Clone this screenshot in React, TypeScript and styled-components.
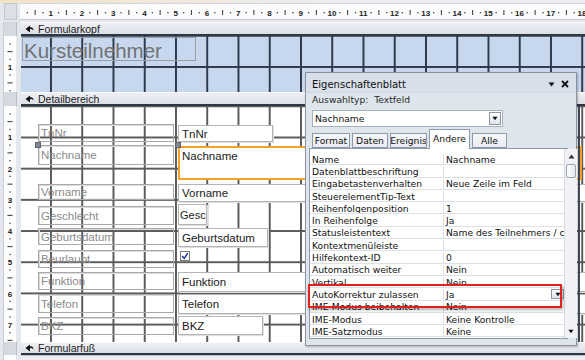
import React from "react";
import styled, { createGlobalStyle } from "styled-components";

const CM = 31.25;

const Global = createGlobalStyle`
  html, body { margin: 0; padding: 0; background: #e4e7ec; overflow: hidden; }
  body { font-family: "Liberation Sans", Arial, sans-serif; }
`;

const Screen = styled.div`
  position: relative;
  width: 585px;
  height: 360px;
  overflow: hidden;
  background: #e4e7ec;
  display: flex;
  flex-direction: column;
`;

const TopStrip = styled.div`
  flex: none;
  height: 3px;
  background: linear-gradient(to right, #f3e2c6, #eceef2 60%);
`;

const RulerRow = styled.div`
  flex: none;
  display: flex;
  height: 17px;
  margin-bottom: 2px;
`;

const Corner = styled.div`
  width: 13px;
  margin-left: 4px;
  box-sizing: border-box;
  background: #dcdfe5;
  border: 1px solid #c3c8d0;
`;

const HRulerBox = styled.div`
  flex: 1;
  margin-left: 3px;
  box-sizing: border-box;
  background: #fbfbfc;
  border-top: 1px solid #d3d7dd;
  border-bottom: 1px solid #c4c9d0;
  overflow: hidden;
`;

const SectionRow = styled.div<{ $h: number }>`
  flex: none;
  display: flex;
  height: ${(p) => p.$h}px;
`;

const RulerCell = styled.div<{ $sel?: boolean }>`
  flex: none;
  width: 14px;
  margin-left: 3px;
  margin-right: 4px;
  box-sizing: border-box;
  background: ${(p) => (p.$sel ? "#d5d9e0" : "#fdfdfd")};
  border-left: 1px solid #c8ccd3;
  border-right: 1px solid ${(p) => (p.$sel ? "#b9bec7" : "#e6e8ec")};
  overflow: hidden;
`;

const SectionBar = styled.div`
  flex: 1;
  display: flex;
  align-items: center;
  gap: 4px;
  padding-left: 4px;
  box-sizing: border-box;
  background: linear-gradient(#eef0f4, #dcdfe6);
  border-top: 1px solid #fafafa;
  border-bottom: 2px solid #2f3742;
  font-size: 10.5px;
  color: #1c1c1c;
`;

const HeaderArea = styled.div`
  flex: 1;
  position: relative;
  background-color: #c7d8ee;
  background-image: linear-gradient(to right, #2d3a4b 2px, transparent 2px),
    linear-gradient(to bottom, #2d3a4b 2px, transparent 2px);
  background-size: ${CM}px 100%, 100% ${CM}px;
  background-position: 29px 0, 0 30px;
`;

const DetailArea = styled.div`
  flex: 1;
  position: relative;
  background-color: #ffffff;
  background-image: linear-gradient(to right, #5b5b5b 2px, transparent 2px),
    linear-gradient(to bottom, #5b5b5b 2px, transparent 2px);
  background-size: ${CM}px 100%, 100% 31.2px;
  background-position: 29px 0, 0 30.5px;
`;

const BottomArea = styled.div`
  flex: 1;
  background: #eceef2;
  border-top: 1px solid #bfc4cc;
`;

const TitleLabel = styled.div`
  position: absolute;
  left: 1px;
  top: 1px;
  width: 174px;
  height: 24px;
  box-sizing: border-box;
  border: 1px solid #9aa0a8;
  font-size: 20.5px;
  line-height: 26px;
  padding-left: 1px;
  color: #717171;
  white-space: nowrap;
`;

const FieldLabel = styled.div`
  position: absolute;
  left: 17px;
  width: 136px;
  box-sizing: border-box;
  border: 1px solid #a9a9a9;
  box-shadow: inset 1px 1px 0 #d9d9d9;
  padding-left: 2px;
  font-size: 11.5px;
  color: #8a8a8a;
  display: flex;
  align-items: center;
  white-space: nowrap;
`;

const TextBox = styled.div<{ $selected?: boolean }>`
  position: absolute;
  left: 157px;
  box-sizing: border-box;
  background: #ffffff;
  border: ${(p) => (p.$selected ? "2px solid #f5a02a" : "1px solid #b4b4b4")};
  box-shadow: ${(p) => (p.$selected ? "none" : "1px 1px 0 #dedede")};
  padding-left: ${(p) => (p.$selected ? "2px" : "3px")};
  font-size: 11.5px;
  color: #1a1a1a;
  display: flex;
  align-items: ${(p) => (p.$selected ? "flex-start" : "center")};
  padding-top: ${(p) => (p.$selected ? "2px" : "0")};
  white-space: nowrap;
  overflow: hidden;
`;

const NarrowBox = styled(TextBox)`
  padding-left: 1px;
  font-size: 11px;
`;

const Handle = styled.div`
  position: absolute;
  width: 6px;
  height: 6px;
  background: #7f8893;
  border: 1px solid #5f6670;
  box-sizing: border-box;
`;

const CheckBox = styled.div`
  position: absolute;
  left: 159px;
  top: 145px;
  width: 10px;
  height: 10px;
  box-sizing: border-box;
  border: 1px solid #7c7c7c;
  background: #fff;
  display: flex;
  align-items: center;
  justify-content: center;
`;

/* Property sheet */
const Panel = styled.div`
  position: absolute;
  left: 305px;
  top: 72px;
  width: 272px;
  height: 274px;
  box-sizing: border-box;
  border: 1px solid #8793a3;
  background: #dfe5ed;
  box-shadow: 1px 1px 2px rgba(0, 0, 0, 0.25);
  display: flex;
  flex-direction: column;
  padding: 0 7px 0 4px;
  font-family: "DejaVu Sans", Verdana, sans-serif;
  font-size: 9.2px;
  color: #111;
`;

const PanelTitle = styled.div`
  flex: none;
  height: 20px;
  margin: 0 -7px 0 -4px;
  padding: 3px 7px 0 6px;
  box-sizing: border-box;
  display: flex;
  align-items: center;
  justify-content: space-between;
  background: #d8dfe8;
  border-bottom: 1px solid #cfd6e0;
  font-size: 10px;
`;

const TitleIcons = styled.div`
  display: flex;
  align-items: center;
  gap: 6px;
`;

const TypeLine = styled.div`
  flex: none;
  height: 13px;
  display: flex;
  align-items: center;
  padding-left: 2px;
  color: #2a2a2a;
`;

const Combo = styled.div`
  flex: none;
  margin-top: 4px;
  margin-left: 2px;
  width: 191px;
  height: 17px;
  box-sizing: border-box;
  background: #fff;
  border: 1px solid #a7b1bd;
  display: flex;
  align-items: center;
  justify-content: space-between;
  padding: 0 1px 0 2px;
`;

const DropButton = styled.div<{ $small?: boolean }>`
  width: ${(p) => (p.$small ? 13 : 12)}px;
  height: ${(p) => (p.$small ? 10 : 13)}px;
  box-sizing: border-box;
  border: 1px solid #8e97a3;
  background: linear-gradient(#fdfdfd, #dfe3e8);
  display: flex;
  align-items: center;
  justify-content: center;
`;

const Tabs = styled.div`
  flex: none;
  margin-top: 3px;
  margin-left: 2px;
  height: 18px;
  display: flex;
  align-items: flex-end;
  gap: 2px;
  position: relative;
  z-index: 1;
`;

const Tab = styled.div<{ $w: number; $active?: boolean }>`
  width: ${(p) => p.$w}px;
  height: ${(p) => (p.$active ? 20 : 15)}px;
  margin-bottom: ${(p) => (p.$active ? -1 : 0)}px;
  box-sizing: border-box;
  border: 1px solid #8f9aa8;
  border-bottom: ${(p) => (p.$active ? "none" : "1px solid #8f9aa8")};
  background: ${(p) => (p.$active ? "#ffffff" : "linear-gradient(#f7f8fa, #e6eaef)")};
  display: flex;
  align-items: center;
  justify-content: center;
  padding-bottom: ${(p) => (p.$active ? 3 : 0)}px;
  overflow: hidden;
  white-space: nowrap;
`;

const Grid = styled.div`
  flex: none;
  margin-left: -1px;
  width: 259px;
  height: 191px;
  box-sizing: border-box;
  border: 1px solid #8f9aa8;
  background: #fff;
  display: flex;
  padding-top: 4px;
`;

const Rows = styled.div`
  flex: 1;
  display: flex;
  flex-direction: column;
`;

const Row = styled.div`
  flex: none;
  height: 12.3px;
  display: flex;
  box-sizing: border-box;
  border-bottom: 1px solid #dde1e7;
  border-top: 1px solid transparent;
`;

const NameCell = styled.div`
  width: 134px;
  flex: none;
  box-sizing: border-box;
  border-right: 1px solid #dde1e7;
  padding-left: 2px;
  display: flex;
  align-items: center;
  white-space: nowrap;
  overflow: hidden;
`;

const ValueCell = styled.div`
  flex: 1;
  min-width: 0;
  padding-left: 2px;
  display: flex;
  align-items: center;
  justify-content: space-between;
  white-space: nowrap;
  overflow: hidden;
`;

const ScrollBar = styled.div`
  width: 13px;
  flex: none;
  margin-top: -4px;
  background: #f0f2f5;
  border-left: 1px solid #d6dbe1;
  display: flex;
  flex-direction: column;
  align-items: center;
  padding: 5px 0 4px;
  box-sizing: border-box;
`;

const Thumb = styled.div`
  margin-top: 5px;
  width: 10px;
  height: 14px;
  box-sizing: border-box;
  border: 1px solid #9aa3ae;
  border-radius: 2px;
  background: linear-gradient(to right, #ffffff, #e6e9ee);
`;

const Spacer = styled.div`
  flex: 1;
`;

const Highlight = styled.div`
  position: absolute;
  left: 308px;
  top: 284px;
  width: 254px;
  height: 24px;
  box-sizing: border-box;
  border: 2px solid #e2211d;
  box-shadow: 1px 2px 3px rgba(0, 0, 0, 0.3);
  pointer-events: none;
`;

const SideMark = styled.div`
  position: absolute;
  left: 578px;
  top: 106px;
  width: 2px;
  height: 236px;
  background: #404a56;
`;

/* Drawings */
const SectionIcon = () => (
  <svg width="9" height="8" viewBox="0 0 9 8">
    <path d="M0.5 4 L5 0.5 L5 2.3 Q8.5 2 8.5 5.5 Q7.2 3.9 5 4.1 L5 7.5 Z" fill="#111" />
  </svg>
);

const HRuler = () => {
  const items: React.ReactNode[] = [];
  for (let q = 1; q <= 74; q++) {
    const x = -0.5 + (q * CM) / 4;
    if (q % 4 === 0) {
      items.push(
        <text key={q} x={x} y={11.5} fontSize="8" fontWeight="700" textAnchor="middle" fill="#222" fontFamily="Liberation Sans, Arial, sans-serif">
          {q / 4}
        </text>
      );
    } else if (q % 4 === 2) {
      items.push(<line key={q} x1={x} x2={x} y1={6} y2={11} stroke="#333" strokeWidth="1" />);
    } else {
      items.push(<rect key={q} x={x - 0.6} y={8} width={1.3} height={1.3} fill="#444" />);
    }
  }
  return (
    <svg width="565" height="15" viewBox="0 0 565 15">
      {items}
    </svg>
  );
};

const VRuler = ({ height, max }: { height: number; max: number }) => {
  const items: React.ReactNode[] = [];
  for (let q = 1; q <= max; q++) {
    const y = (q * CM) / 4;
    if (q % 4 === 0) {
      items.push(
        <text key={q} x={6} y={y + 3} fontSize="8" fontWeight="700" textAnchor="middle" fill="#222" fontFamily="Liberation Sans, Arial, sans-serif">
          {q / 4}
        </text>
      );
    } else if (q % 4 === 2) {
      items.push(<line key={q} x1={3.5} x2={8.5} y1={y} y2={y} stroke="#333" strokeWidth="1" />);
    } else {
      items.push(<rect key={q} x={5.4} y={y - 0.6} width={1.3} height={1.3} fill="#444" />);
    }
  }
  return (
    <svg width="12" height={height} viewBox={`0 0 12 ${height}`}>
      {items}
    </svg>
  );
};

const labels: [string, number, number][] = [
  ["TnNr", 18, 18],
  ["Nachname", 39, 20],
  ["Vorname", 78, 16],
  ["Geschlecht", 100, 19],
  ["Geburtsdatum", 122, 17],
  ["Beurlaubt", 144, 18],
  ["Funktion", 166, 18],
  ["Telefon", 188, 19],
  ["BKZ", 211, 18],
];

const boxes: [string, number, number, number, boolean?][] = [
  ["TnNr", 19, 17, 95],
  ["Nachname", 40, 34, 404, true],
  ["Vorname", 78, 18, 420],
  ["Geburtsdatum", 122, 19, 90],
  ["Funktion", 166, 20, 420],
  ["Telefon", 188, 20, 420],
  ["BKZ", 210, 19, 85],
];

const props: [string, string][] = [
  ["Name", "Nachname"],
  ["Datenblattbeschriftung", ""],
  ["Eingabetastenverhalten", "Neue Zeile im Feld"],
  ["SteuerelementTip-Text", ""],
  ["Reihenfolgenposition", "1"],
  ["In Reihenfolge", "Ja"],
  ["Statusleistentext", "Name des Teilnehmers / c"],
  ["Kontextmenüleiste", ""],
  ["Hilfekontext-ID", "0"],
  ["Automatisch weiter", "Nein"],
  ["Vertikal", "Nein"],
  ["AutoKorrektur zulassen", "Ja"],
  ["IME-Modus beibehalten", "Nein"],
  ["IME-Modus", "Keine Kontrolle"],
  ["IME-Satzmodus", "Keine"],
];

const DownGlyph = ({ w = 7 }: { w?: number }) => (
  <svg width={w} height="5" viewBox="0 0 7 5">
    <path d="M0.5 0.5 L6.5 0.5 L3.5 4.5 Z" fill="#111" />
  </svg>
);

export default function App() {
  return (
    <Screen>
      <Global />
      <TopStrip />
      <RulerRow>
        <Corner />
        <HRulerBox>
          <HRuler />
        </HRulerBox>
      </RulerRow>

      <SectionRow $h={14}>
        <RulerCell $sel />
        <SectionBar>
          <SectionIcon />
          Formularkopf
        </SectionBar>
      </SectionRow>
      <SectionRow $h={56}>
        <RulerCell>
          <VRuler height={56} max={7} />
        </RulerCell>
        <HeaderArea>
          <TitleLabel>Kursteilnehmer</TitleLabel>
        </HeaderArea>
      </SectionRow>

      <SectionRow $h={14}>
        <RulerCell $sel />
        <SectionBar>
          <SectionIcon />
          Detailbereich
        </SectionBar>
      </SectionRow>
      <SectionRow $h={236}>
        <RulerCell>
          <VRuler height={236} max={30} />
        </RulerCell>
        <DetailArea>
          {labels.map(([t, top, h]) => (
            <FieldLabel key={t} style={{ top, height: h }}>
              {t}
            </FieldLabel>
          ))}
          {boxes.map(([t, top, h, w, sel]) => (
            <TextBox key={t} $selected={sel} style={{ top, height: h, width: w }}>
              {t}
            </TextBox>
          ))}
          <NarrowBox style={{ top: 98, height: 21, width: 29 }}>Gesc</NarrowBox>
          <CheckBox>
            <svg width="8" height="8" viewBox="0 0 8 8">
              <path d="M1.2 4 L3.2 6.3 L6.8 1.2" stroke="#1c2f8c" strokeWidth="1.4" fill="none" />
            </svg>
          </CheckBox>
          <Handle style={{ left: 14, top: 36 }} />
          <Handle style={{ left: 154, top: 36 }} />
        </DetailArea>
      </SectionRow>

      <SectionRow $h={13}>
        <RulerCell $sel />
        <SectionBar>
          <SectionIcon />
          Formularfuß
        </SectionBar>
      </SectionRow>
      <SectionRow $h={5}>
        <RulerCell />
        <BottomArea />
      </SectionRow>

      <SideMark />

      <Panel>
        <PanelTitle>
          <span>Eigenschaftenblatt</span>
          <TitleIcons>
            <DownGlyph />
            <svg width="8" height="8" viewBox="0 0 8 8">
              <path d="M1 1 L7 7 M7 1 L1 7" stroke="#111" strokeWidth="1.8" />
            </svg>
          </TitleIcons>
        </PanelTitle>
        <TypeLine>Auswahltyp:&nbsp; Textfeld</TypeLine>
        <Combo>
          <span>Nachname</span>
          <DropButton>
            <DownGlyph w={6} />
          </DropButton>
        </Combo>
        <Tabs>
          <Tab $w={38}>Format</Tab>
          <Tab $w={36}>Daten</Tab>
          <Tab $w={37}>Ereignis</Tab>
          <Tab $w={41} $active>
            Andere
          </Tab>
          <Tab $w={35}>Alle</Tab>
        </Tabs>
        <Grid>
          <Rows>
            {props.map(([n, v]) => (
              <Row key={n}>
                <NameCell>{n}</NameCell>
                <ValueCell>
                  <span>{v}</span>
                  {n === "AutoKorrektur zulassen" && (
                    <DropButton $small>
                      <DownGlyph w={6} />
                    </DropButton>
                  )}
                </ValueCell>
              </Row>
            ))}
          </Rows>
          <ScrollBar>
            <svg width="7" height="5" viewBox="0 0 7 5">
              <path d="M0.5 4.5 L6.5 4.5 L3.5 0.5 Z" fill="#333" />
            </svg>
            <Thumb />
            <Spacer />
            <DownGlyph w={6} />
          </ScrollBar>
        </Grid>
      </Panel>

      <Highlight />
    </Screen>
  );
}
